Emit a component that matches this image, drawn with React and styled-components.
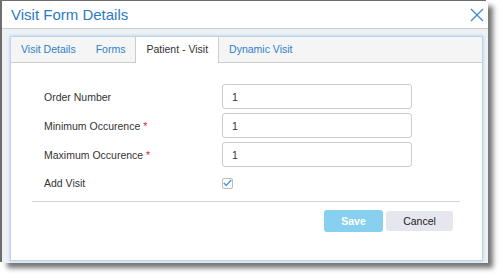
import React from "react";
import styled, { createGlobalStyle } from "styled-components";

const Global = createGlobalStyle`
  html, body {
    margin: 0;
    background: #fff;
    font-family: "Liberation Sans", Arial, sans-serif;
  }
`;

const Screen = styled.div`
  width: 503px;
  height: 278px;
  padding: 1px 0 0 2px;
  box-sizing: border-box;
  overflow: hidden;
`;

const Dialog = styled.div`
  width: 486px;
  height: 262px;
  display: flex;
  flex-direction: column;
  background: #eef1f4;
  box-shadow: 5px 5px 5px rgba(0, 0, 0, 0.55), -2px -1px 0 #6e6e6e;
`;

const Header = styled.div`
  height: 27px;
  flex: 0 0 27px;
  display: flex;
  align-items: center;
  justify-content: space-between;
  padding: 0 4px 0 9px;
  background: #fff;
  border-bottom: 1px solid #cdcdcd;
  .title {
    font-size: 15px;
    color: #2b7bc4;
  }
`;

const Close = styled.button`
  border: 0;
  background: none;
  padding: 0;
  width: 14px;
  height: 14px;
  display: flex;
  cursor: pointer;
`;

const Body = styled.div`
  flex: 1;
  display: flex;
  padding: 7px 5px 2px 8px;
`;

const Panel = styled.div`
  flex: 1;
  display: flex;
  flex-direction: column;
  background: #fff;
  border: 1px solid #bcd5ee;
  box-shadow: 0 0 3px rgba(110, 170, 230, 0.55);
`;

const TabBar = styled.div`
  display: flex;
  height: 25px;
  background: #f5f5f5;
  border-bottom: 1px solid #cccccc;
`;

const Tab = styled.div`
  padding: 0 10px;
  font-size: 10.5px;
  line-height: 25px;
  height: ${(p) => (p.active ? "26px" : "25px")};
  color: ${(p) => (p.active ? "#333" : "#2f80c9")};
  background: ${(p) => (p.active ? "#fff" : "transparent")};
  border-left: ${(p) => (p.active ? "1px solid #cccccc" : "0")};
  border-right: ${(p) => (p.active ? "1px solid #cccccc" : "0")};
  box-sizing: border-box;
`;

const Form = styled.div`
  display: grid;
  grid-template-columns: 178px 190px;
  row-gap: 4px;
  align-items: center;
  padding: 21px 0 0 33px;
`;

const Label = styled.div`
  font-size: 10.5px;
  color: #333;
  .req {
    color: #e02a2a;
  }
`;

const Input = styled.div`
  height: 25px;
  box-sizing: border-box;
  border: 1px solid #cccccc;
  border-radius: 3px;
  padding-left: 9px;
  display: flex;
  align-items: center;
  font-size: 10.5px;
  color: #333;
`;

const CheckCell = styled.div`
  margin-top: 6px;
  height: 12px;
  display: flex;
  align-items: center;
`;

const Check = styled.div`
  width: 11px;
  height: 11px;
  box-sizing: border-box;
  border: 1px solid #bbbbbb;
  border-radius: 2px;
  display: flex;
  align-items: center;
  justify-content: center;
`;

const Divider = styled.div`
  height: 1px;
  background: #d4d4d4;
  margin: 12px 22px 0 21px;
`;

const Actions = styled.div`
  display: flex;
  justify-content: flex-end;
  align-items: center;
  gap: 3px;
  padding: 8px 29px 0 0;
`;

const Button = styled.button`
  border: 0;
  border-radius: 3px;
  font-family: inherit;
  font-size: 10.5px;
  padding: 0;
  width: ${(p) => (p.primary ? "59px" : "67px")};
  height: ${(p) => (p.primary ? "22px" : "20px")};
  background: ${(p) => (p.primary ? "#88d0f0" : "#e6e6ee")};
  color: ${(p) => (p.primary ? "#fff" : "#222")};
  font-weight: ${(p) => (p.primary ? "bold" : "normal")};
`;

const tabs = ["Visit Details", "Forms", "Patient - Visit", "Dynamic Visit"];

const fields = [
  { label: "Order Number", value: "1" },
  { label: "Minimum Occurence", value: "1", required: true },
  { label: "Maximum Occurence", value: "1", required: true },
];

export default function App() {
  return (
    <Screen>
      <Global />
      <Dialog>
        <Header>
          <span className="title">Visit Form Details</span>
          <Close>
            <svg width="14" height="14" viewBox="0 0 14 14">
              <path d="M1 1 L13 13 M13 1 L1 13" stroke="#3b8bd3" strokeWidth="1.3" fill="none" />
            </svg>
          </Close>
        </Header>
        <Body>
          <Panel>
            <TabBar>
              {tabs.map((t) => (
                <Tab key={t} active={t === "Patient - Visit"}>
                  {t}
                </Tab>
              ))}
            </TabBar>
            <Form>
              {fields.map((f) => (
                <React.Fragment key={f.label}>
                  <Label>
                    {f.label}
                    {f.required && <span className="req"> *</span>}
                  </Label>
                  <Input>{f.value}</Input>
                </React.Fragment>
              ))}
              <Label style={{ marginTop: 6 }}>Add Visit</Label>
              <CheckCell>
                <Check>
                  <svg width="9" height="8" viewBox="0 0 9 8">
                    <path d="M0.8 4 L3.3 6.4 L8.3 1" stroke="#3d8fd8" strokeWidth="1.3" fill="none" />
                  </svg>
                </Check>
              </CheckCell>
            </Form>
            <Divider />
            <Actions>
              <Button primary>Save</Button>
              <Button>Cancel</Button>
            </Actions>
          </Panel>
        </Body>
      </Dialog>
    </Screen>
  );
}
